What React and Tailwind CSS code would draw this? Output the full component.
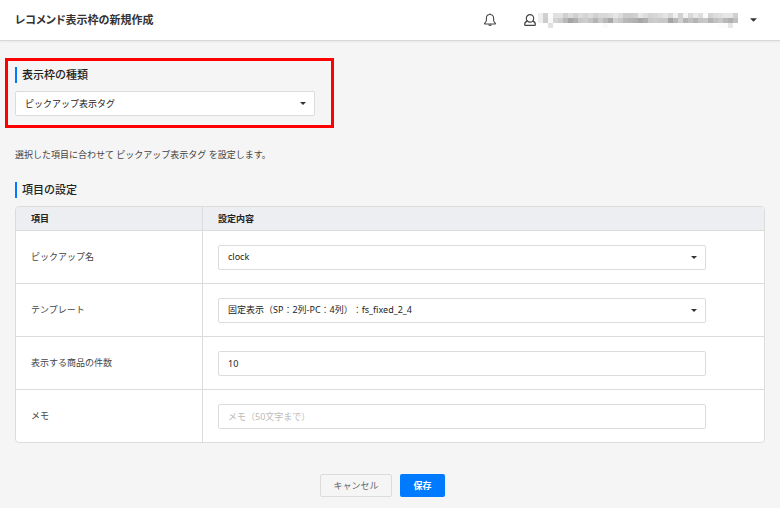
import { useState } from 'react';

const FONT = "font-['Noto_Sans','Noto_Sans_CJK_JP',sans-serif]";

// 伏せ字モザイクの濃淡（5px セル）
const MASK_ROWS = [
  'ef d0 fb e0 e2 d0 dc d0 dc d4 dc d0 d8 d8 dc e6 dd cc cc d0 e8 dd d4 d8 dc e4 d8 f0 d0 f4 d8 e8 dd fb d4 dd e0 e6 e6 d0',
  'ee cc f8 d4 cc b8 a4 b0 c8 cc c4 b4 c8 b8 a8 d0 c8 b8 b4 b0 a6 b0 c8 cc c8 c8 a4 b8 d0 b4 c0 b4 c4 c8 b4 c0 c8 b8 b0 c0',
  'ff ff e2 ff ff ff ff ff ff ff ff ff ff fa ff ff ff ff ff ff ff ff ff ff ff ff ff ff ff ff ff ff ff ff ff ff fc fc e6 ff',
].map((row) => row.split(' '));

function MaskedName() {
  return (
    <svg className="h-[15px] w-[200px]" viewBox="0 0 200 15" shapeRendering="crispEdges" aria-hidden="true">
      {MASK_ROWS.map((row, y) =>
        row.map((c, x) => (
          <rect key={`${x}-${y}`} x={x * 5} y={y * 5} width="5" height="5" fill={`#${c}${c}${c}`} />
        ))
      )}
    </svg>
  );
}

function BellIcon() {
  return (
    <svg className="h-[14px] w-[12px]" viewBox="0 0 12 14" fill="none" stroke="#444" strokeWidth="1.100" strokeLinejoin="round" aria-hidden="true">
      <path d="M6 .4v1.200M6 1.500C3.600 1.500 2.400 3.100 2.400 5.200V7.200C2.400 8.600 1.700 9.200.8 10.100Q.2 11 1.200 11h9.600Q11.800 11 11.200 10.100C10.300 9.200 9.600 8.600 9.600 7.200V5.200C9.600 3.100 8.400 1.500 6 1.500Z" />
      <path d="M4.800 11.400c.2 1.500 2.200 1.500 2.400 0" />
    </svg>
  );
}

function UserIcon() {
  return (
    <svg className="h-[12px] w-[12px]" viewBox="0 0 12 12" fill="none" stroke="#444" strokeWidth="1.200" strokeLinejoin="round" aria-hidden="true">
      <circle cx="6" cy="4.400" r="3.700" />
      <path d="M3.400 7.200C1.500 7.700.7 8.700.7 10.200v.6q0 .6.6.6h9.400q.6 0 .6-.6v-.6c0-1.500-.8-2.500-2.700-3" />
    </svg>
  );
}

function Caret({ className }) {
  return (
    <svg className={className} viewBox="0 0 6 3" fill="#333" aria-hidden="true">
      <path d="M0 0h6L3 3Z" />
    </svg>
  );
}

function Heading({ children }) {
  return (
    <h2 className="border-l-2 border-[#007bff] pl-[5px] text-[11px] leading-4 font-medium text-[#222]">
      {children}
    </h2>
  );
}

function Select({ id, label, options }) {
  return (
    <div className="relative w-full">
      <select
        id={id}
        aria-label={label}
        className="block h-[25px] w-full appearance-none rounded-xs border border-[#dcdcdc] bg-white px-[9px] text-[9px] text-[#222] [text-spacing-trim:space-all]"
      >
        {options.map((o) => (
          <option key={o}>{o}</option>
        ))}
      </select>
      <Caret className="pointer-events-none absolute top-[11px] right-[9px] h-[3px] w-[6px]" />
    </div>
  );
}

function Row({ id, label, children }) {
  return (
    <tr className="h-[53px]">
      <th scope="row" className="border-t border-r border-[#dcdcdc] px-[15px] text-left font-normal">
        <label htmlFor={id}>{label}</label>
      </th>
      <td className="border-t border-[#dcdcdc] px-[15px]">
        <div className="max-w-[488px]">{children}</div>
      </td>
    </tr>
  );
}

const inputClass =
  'block h-[25px] w-full rounded-xs border border-[#dcdcdc] bg-white px-[9px] text-[9px] text-[#222] placeholder:text-[#bbb]';

export default function App() {
  const [count, setCount] = useState('10');
  const [memo, setMemo] = useState('');

  return (
    <div lang="ja" className={`min-h-screen bg-[#f5f5f5] text-[9px] leading-4 text-[#444] ${FONT}`}>
      <header className="flex h-[41px] items-center border-b border-[#d8d8d8] bg-white pr-[23px] pl-[15px] shadow-xs">
        <h1 className="flex-1 text-[11px] font-bold text-[#333] [font-feature-settings:'palt']">
          レコメンド表示枠の新規作成
        </h1>
        <button type="button" aria-label="お知らせ" className="mr-[28px]">
          <BellIcon />
        </button>
        <button type="button" aria-label="アカウント" className="flex items-center">
          <UserIcon />
          <span className="mr-[12px] ml-[2px]">
            <MaskedName />
          </span>
          <Caret className="h-[4px] w-[7px]" />
        </button>
      </header>

      <main className="px-[15px] pt-[26px] pb-[11px]">
        {/* 表示枠の種類 */}
        <section className="relative w-[300px]">
          <div className="pointer-events-none absolute -top-[9px] -right-[19px] -bottom-[12px] -left-[10px] border-3 border-[#ff0000]" />
          <Heading>表示枠の種類</Heading>
          <div className="mt-2">
            <Select id="type" label="表示枠の種類" options={['ピックアップ表示タグ']} />
          </div>
        </section>

        <p className="mt-[31px]">選択した項目に合わせて ピックアップ表示タグ を設定します。</p>

        {/* 項目の設定 */}
        <form className="mt-[19px]" onSubmit={(e) => e.preventDefault()}>
          <Heading>項目の設定</Heading>
          <div className="mt-2 overflow-hidden rounded border border-[#dcdcdc] bg-white">
            <table className="w-full table-fixed border-separate border-spacing-0">
              <thead>
                <tr className="h-[23px] bg-[#edeef2] text-left text-[#222]">
                  <th scope="col" className="w-1/4 border-r border-[#dcdcdc] px-[15px] font-bold">項目</th>
                  <th scope="col" className="px-[15px] font-bold">設定内容</th>
                </tr>
              </thead>
              <tbody>
                <Row id="pickup" label="ピックアップ名">
                  <Select id="pickup" options={['clock']} />
                </Row>
                <Row id="template" label="テンプレート">
                  <Select id="template" options={['固定表示（SP：2列-PC：4列）：fs_fixed_2_4']} />
                </Row>
                <Row id="count" label="表示する商品の件数">
                  <input id="count" type="text" value={count} onChange={(e) => setCount(e.target.value)} className={inputClass} />
                </Row>
                <Row id="memo" label="メモ">
                  <input id="memo" type="text" placeholder="メモ（50文字まで）" value={memo} onChange={(e) => setMemo(e.target.value)} className={inputClass} />
                </Row>
              </tbody>
            </table>
          </div>

          <div className="mt-[31px] flex justify-center gap-2 pr-[15px]">
            <button type="button" className="h-[23px] w-[72px] rounded-xs border border-[#dcdcdc] bg-[#f5f5f5] text-[#666]">
              キャンセル
            </button>
            <button type="submit" className="h-[23px] w-[45px] rounded-xs bg-[#007bff] font-bold text-white">
              保存
            </button>
          </div>
        </form>
      </main>
    </div>
  );
}
